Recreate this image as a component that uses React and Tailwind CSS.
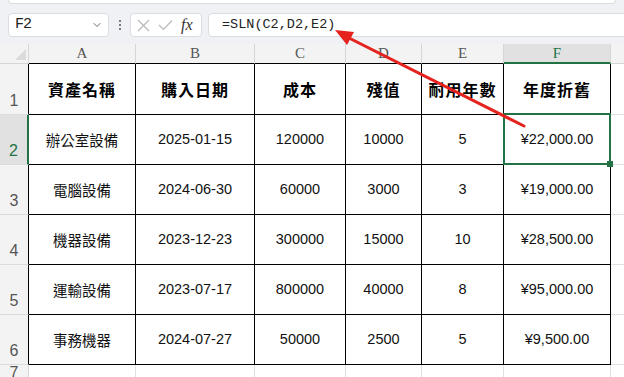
import { ChevronDown } from 'lucide-react';

const widths = ['w-[107px]', 'w-[119px]', 'w-[91px]', 'w-[76px]', 'w-[82px]', 'w-[107px]'];
const letters = ['A', 'B', 'C', 'D', 'E', 'F'];
const heads = ['資產名稱', '購入日期', '成本', '殘值', '耐用年數', '年度折舊'];

const rows = [
  ['辦公室設備', '2025-01-15', '120000', '10000', '5', '¥22,000.00'],
  ['電腦設備', '2024-06-30', '60000', '3000', '3', '¥19,000.00'],
  ['機器設備', '2023-12-23', '300000', '15000', '10', '¥28,500.00'],
  ['運輸設備', '2023-07-17', '800000', '40000', '8', '¥95,000.00'],
  ['事務機器', '2024-07-27', '50000', '2500', '5', '¥9,500.00'],
];

const cjk = "font-['Noto_Sans_CJK_TC',sans-serif]";
const num = "font-['Liberation_Sans','Noto_Sans_CJK_TC',sans-serif]";

const RowHead = ({ n, active }) => (
  <div
    className={`w-[29px] shrink-0 flex items-end justify-center pb-[1px] border-b border-b-[#dcdcdc] text-[16px] ${num} ${
      active
        ? 'bg-[#e1e1e1] border-r-2 border-r-[#217346] text-[#217346]'
        : 'bg-[#f3f3f3] border-r border-r-black text-[#555]'
    }`}
  >
    {n}
  </div>
);

const Arrow = () => (
  <svg className="absolute left-0 top-0 z-20 pointer-events-none" width="624" height="377">
    <line x1="524" y1="126" x2="349" y2="38" stroke="#e5221d" strokeWidth="3" strokeLinecap="round" />
    <polygon points="335,30 354,32 347,45" fill="#e5221d" />
  </svg>
);

export default function App() {
  return (
    <div className={`relative w-[624px] h-[377px] overflow-hidden bg-[#eff1f4] ${num}`}>
      {/* ribbon edge */}
      <div className="mx-2 h-[4px] bg-white rounded-b-md border-x border-b border-[#d9dce0]" />

      {/* formula bar */}
      <div className="flex items-center h-[24px] mt-[9px] mb-[7px]">
        <div className="ml-[8px] w-[101px] h-full flex items-center justify-between pl-[6px] pr-[5px] bg-white border border-[#dadde1] rounded-[4px]">
          <span className="font-['Liberation_Mono',monospace] text-[15px] tracking-[-1px] text-[#222]">F2</span>
          <ChevronDown className="w-[12px] h-[12px] text-[#444]" strokeWidth={1.6} />
        </div>
        <div className="w-[21px] flex flex-col items-center gap-[2px]">
          <span className="w-[2px] h-[2px] bg-[#555] rounded-full" />
          <span className="w-[2px] h-[2px] bg-[#555] rounded-full" />
          <span className="w-[2px] h-[2px] bg-[#555] rounded-full" />
        </div>
        <div className="w-[72px] h-full flex items-center gap-[8px] pl-[6px] bg-white border border-[#dadde1] rounded-[4px]">
          <svg width="13" height="13" viewBox="0 0 13 13">
            <path d="M1 1 L12 12 M12 1 L1 12" stroke="#b7b9bd" strokeWidth="1.2" fill="none" />
          </svg>
          <svg width="15" height="12" viewBox="0 0 15 12">
            <path d="M1 6 L5.5 10.5 L14 1.5" stroke="#b7b9bd" strokeWidth="1.2" fill="none" />
          </svg>
          <span className="font-['Liberation_Serif',serif] italic text-[16px] text-[#333] leading-none">fx</span>
        </div>
        <div className="ml-[6px] flex-1 -mr-2 h-full flex items-center pl-[13px] bg-white border border-[#dadde1] rounded-[4px]">
          <span className="font-['Liberation_Mono',monospace] text-[13.5px] text-[#222]">=SLN(C2,D2,E2)</span>
        </div>
      </div>

      {/* sheet */}
      <div className="bg-white">
        {/* column headers */}
        <div className="flex h-[20px] bg-[#f3f3f3]">
          <div className="w-[29px] shrink-0 relative border-r border-b border-[#d6d6d6]">
            <div className="absolute right-[2px] bottom-[3px] w-0 h-0 border-l-[11px] border-l-transparent border-b-[11px] border-b-[#dcdcdc]" />
          </div>
          {letters.map((l, i) => (
            <div
              key={l}
              className={`${widths[i]} shrink-0 flex items-center justify-center border-r border-r-[#d6d6d6] font-['Liberation_Serif',serif] text-[15px] ${
                l === 'F'
                  ? 'bg-[#e1e1e1] border-b-2 border-b-[#217346] text-[#217346]'
                  : 'border-b border-b-black text-[#555]'
              }`}
            >
              {l}
            </div>
          ))}
          <div className="flex-1 border-b border-[#d6d6d6]" />
        </div>

        {/* row 1 */}
        <div className="flex h-[51px]">
          <RowHead n={1} />
          {heads.map((h, i) => (
            <div
              key={h}
              className={`${widths[i]} shrink-0 flex items-center justify-center border-r border-b border-black ${cjk} font-bold text-[16px] tracking-[1px] text-black`}
            >
              {h}
            </div>
          ))}
          <div className="flex-1 border-b border-[#e1e1e1]" />
        </div>

        {/* data rows */}
        {rows.map((r, ri) => (
          <div key={ri} className="flex h-[50px]">
            <RowHead n={ri + 2} active={ri === 0} />
            {r.map((v, i) => (
              <div
                key={i}
                className={`${widths[i]} shrink-0 relative flex items-center justify-center border-r border-b border-black text-[#111] ${
                  i === 0 ? `${cjk} text-[14.5px]` : `${num} text-[14.5px]`
                }`}
              >
                {v}
                {ri === 0 && i === 5 && (
                  <div className="absolute z-10 -left-[1px] -top-[2px] -right-[1px] -bottom-[1px] border-2 border-[#217346]">
                    <div className="absolute -right-[4px] -bottom-[4px] w-[6px] h-[6px] bg-[#217346]" />
                  </div>
                )}
              </div>
            ))}
            <div className="flex-1 border-b border-[#e1e1e1]" />
          </div>
        ))}

        {/* row 7 */}
        <div className="flex h-[20px]">
          <div className={`w-[29px] shrink-0 flex items-end justify-center bg-[#f3f3f3] border-r border-[#d6d6d6] text-[16px] text-[#555] ${num}`}>
            7
          </div>
          {widths.map((w, i) => (
            <div key={i} className={`${w} shrink-0 border-r border-[#e1e1e1]`} />
          ))}
          <div className="flex-1" />
        </div>
      </div>

      <Arrow />
    </div>
  );
}
